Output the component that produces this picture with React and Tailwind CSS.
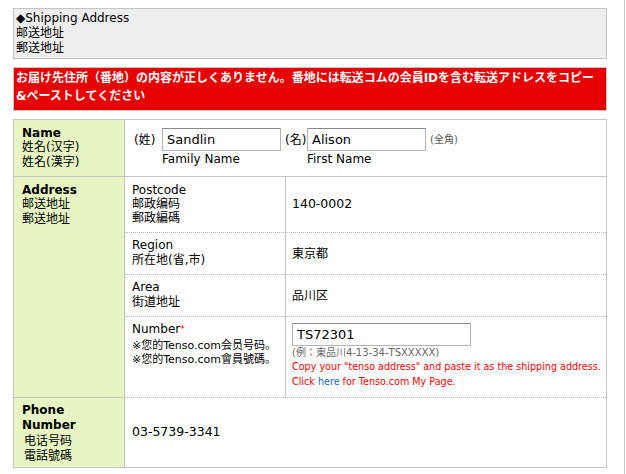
import React from "react";

function Label({ children, className = "" }) {
  return (
    <div className={"w-[111px] shrink-0 border-r border-[#c4c4c4] bg-[#e6f5c2] pl-[8px] text-[12px] " + className}>
      {children}
    </div>
  );
}

function SubRow({ h, label, children, valueClass = "items-center" }) {
  return (
    <div className={"flex border-b border-dotted border-[#b8b8b8] " + h}>
      <div className="w-[161px] shrink-0 border-r border-[#c4c4c4] pl-[7px]">{label}</div>
      <div className={"flex flex-1 pl-[6px] " + valueClass}>{children}</div>
    </div>
  );
}

export default function App() {
  return (
    <div className="w-[625px] min-h-[474px] border-r border-[#c8c8c8] bg-white pl-[13px] pt-[8px] text-black font-['DejaVu_Sans','Noto_Sans_CJK_JP',sans-serif]">
      <div className="w-[594px] border border-[#c4c4c4] bg-[#eeeeee] px-[2px] py-[2px] text-[12px] leading-[15px]">
        <div>◆Shipping Address</div>
        <div>邮送地址</div>
        <div>郵送地址</div>
      </div>

      <div className="mt-[8px] w-[594px] border border-[#c4c4c4] bg-[#e60000] px-[2px] pt-[1px] pb-[5px] text-[12px] font-bold leading-[18px] text-white">
        <div className="whitespace-nowrap">お届け先住所（番地）の内容が正しくありません。番地には転送コムの会員IDを含む転送アドレスをコピー</div>
        <div>{"&ペーストしてください"}</div>
      </div>

      <div className="mt-[8px] w-[594px] border border-[#c4c4c4] text-[12px]">
        {/* Name */}
        <div className="flex h-[57px] border-b border-[#c4c4c4]">
          <Label className="pt-[6px]">
            <div className="font-bold leading-[14px]">Name</div>
            <div className="leading-[15px]">姓名(汉字)</div>
            <div className="leading-[15px]">姓名(漢字)</div>
          </Label>
          <div className="flex flex-1 items-start pl-[7px] pt-[8px]">
            <span className="flex h-[23px] w-[30px] items-center pl-[2px]">(姓)</span>
            <div className="flex flex-col">
              <input readOnly value="Sandlin" className="h-[23px] w-[119px] border border-[#b4b4b4] border-t-[#8a8a8a] bg-white px-[4px] text-[13px] text-black outline-none" />
              <span className="mt-[1px] leading-[14px]">Family Name</span>
            </div>
            <span className="flex h-[23px] w-[26px] items-center pl-[4px]">(名)</span>
            <div className="flex flex-col">
              <input readOnly value="Alison" className="h-[23px] w-[119px] border border-[#b4b4b4] border-t-[#8a8a8a] bg-white px-[4px] text-[13px] text-black outline-none" />
              <span className="mt-[1px] leading-[14px]">First Name</span>
            </div>
            <span className="ml-[4px] flex h-[23px] items-center text-[10px] text-[#555555]">(全角)</span>
          </div>
        </div>

        {/* Address */}
        <div className="flex h-[221px]">
          <Label className="border-b border-b-[#c4c4c4] pt-[6px]">
            <div className="font-bold leading-[14px]">Address</div>
            <div className="leading-[15px]">邮送地址</div>
            <div className="leading-[15px]">郵送地址</div>
          </Label>
          <div className="flex flex-1 flex-col">
            <SubRow
              h="h-[56px]"
              label={
                <div className="pt-[6px] leading-[14px]">
                  <div>Postcode</div>
                  <div>邮政编码</div>
                  <div>郵政編碼</div>
                </div>
              }
            >
              <span className="text-[12.5px]">140-0002</span>
            </SubRow>
            <SubRow
              h="h-[42px]"
              label={
                <div className="pt-[5px]">
                  <div className="leading-[14px]">Region</div>
                  <div className="leading-[16px]">所在地(省,市)</div>
                </div>
              }
            >
              <span>東京都</span>
            </SubRow>
            <SubRow
              h="h-[42px]"
              label={
                <div className="pt-[5px]">
                  <div className="leading-[14px]">Area</div>
                  <div className="leading-[16px]">街道地址</div>
                </div>
              }
            >
              <span>品川区</span>
            </SubRow>
            <SubRow
              h="h-[81px]"
              valueClass="flex-col items-start pt-[6px]"
              label={
                <div className="pt-[5px]">
                  <div className="leading-[15px]">
                    Number<span className="align-top text-[9px] text-[#e60000]">*</span>
                  </div>
                  <div className="mt-[2px] whitespace-nowrap text-[11px] leading-[14px]">※您的Tenso.com会员号码。</div>
                  <div className="whitespace-nowrap text-[11px] leading-[14px]">※您的Tenso.com會員號碼。</div>
                </div>
              }
            >
              <input readOnly value="TS72301" className="h-[23px] w-[179px] border border-[#b4b4b4] border-t-[#8a8a8a] bg-white px-[4px] text-[13px] text-black outline-none" />
              <div className="text-[10px] leading-[13px] text-[#666666]">(例：東品川4-13-34-TSXXXXX)</div>
              <div className="whitespace-nowrap text-[9.6px] leading-[15px] text-[#ff0000]">
                Copy your "tenso address" and paste it as the shipping address.
              </div>
              <div className="whitespace-nowrap text-[9.6px] leading-[15px] text-[#ff0000]">
                Click <span className="text-[#1a66d6]">here</span> for Tenso.com My Page.
              </div>
            </SubRow>
          </div>
        </div>

        {/* Phone */}
        <div className="flex h-[69px]">
          <Label className="pt-[5px]">
            <div className="font-bold leading-[15px]">Phone</div>
            <div className="font-bold leading-[15px]">Number</div>
            <div className="mt-[1px] pl-[2px] leading-[15px]">电话号码</div>
            <div className="pl-[2px] leading-[15px]">電話號碼</div>
          </Label>
          <div className="flex flex-1 items-center pl-[7px]">
            <span className="text-[12.5px]">03-5739-3341</span>
          </div>
        </div>
      </div>
    </div>
  );
}
